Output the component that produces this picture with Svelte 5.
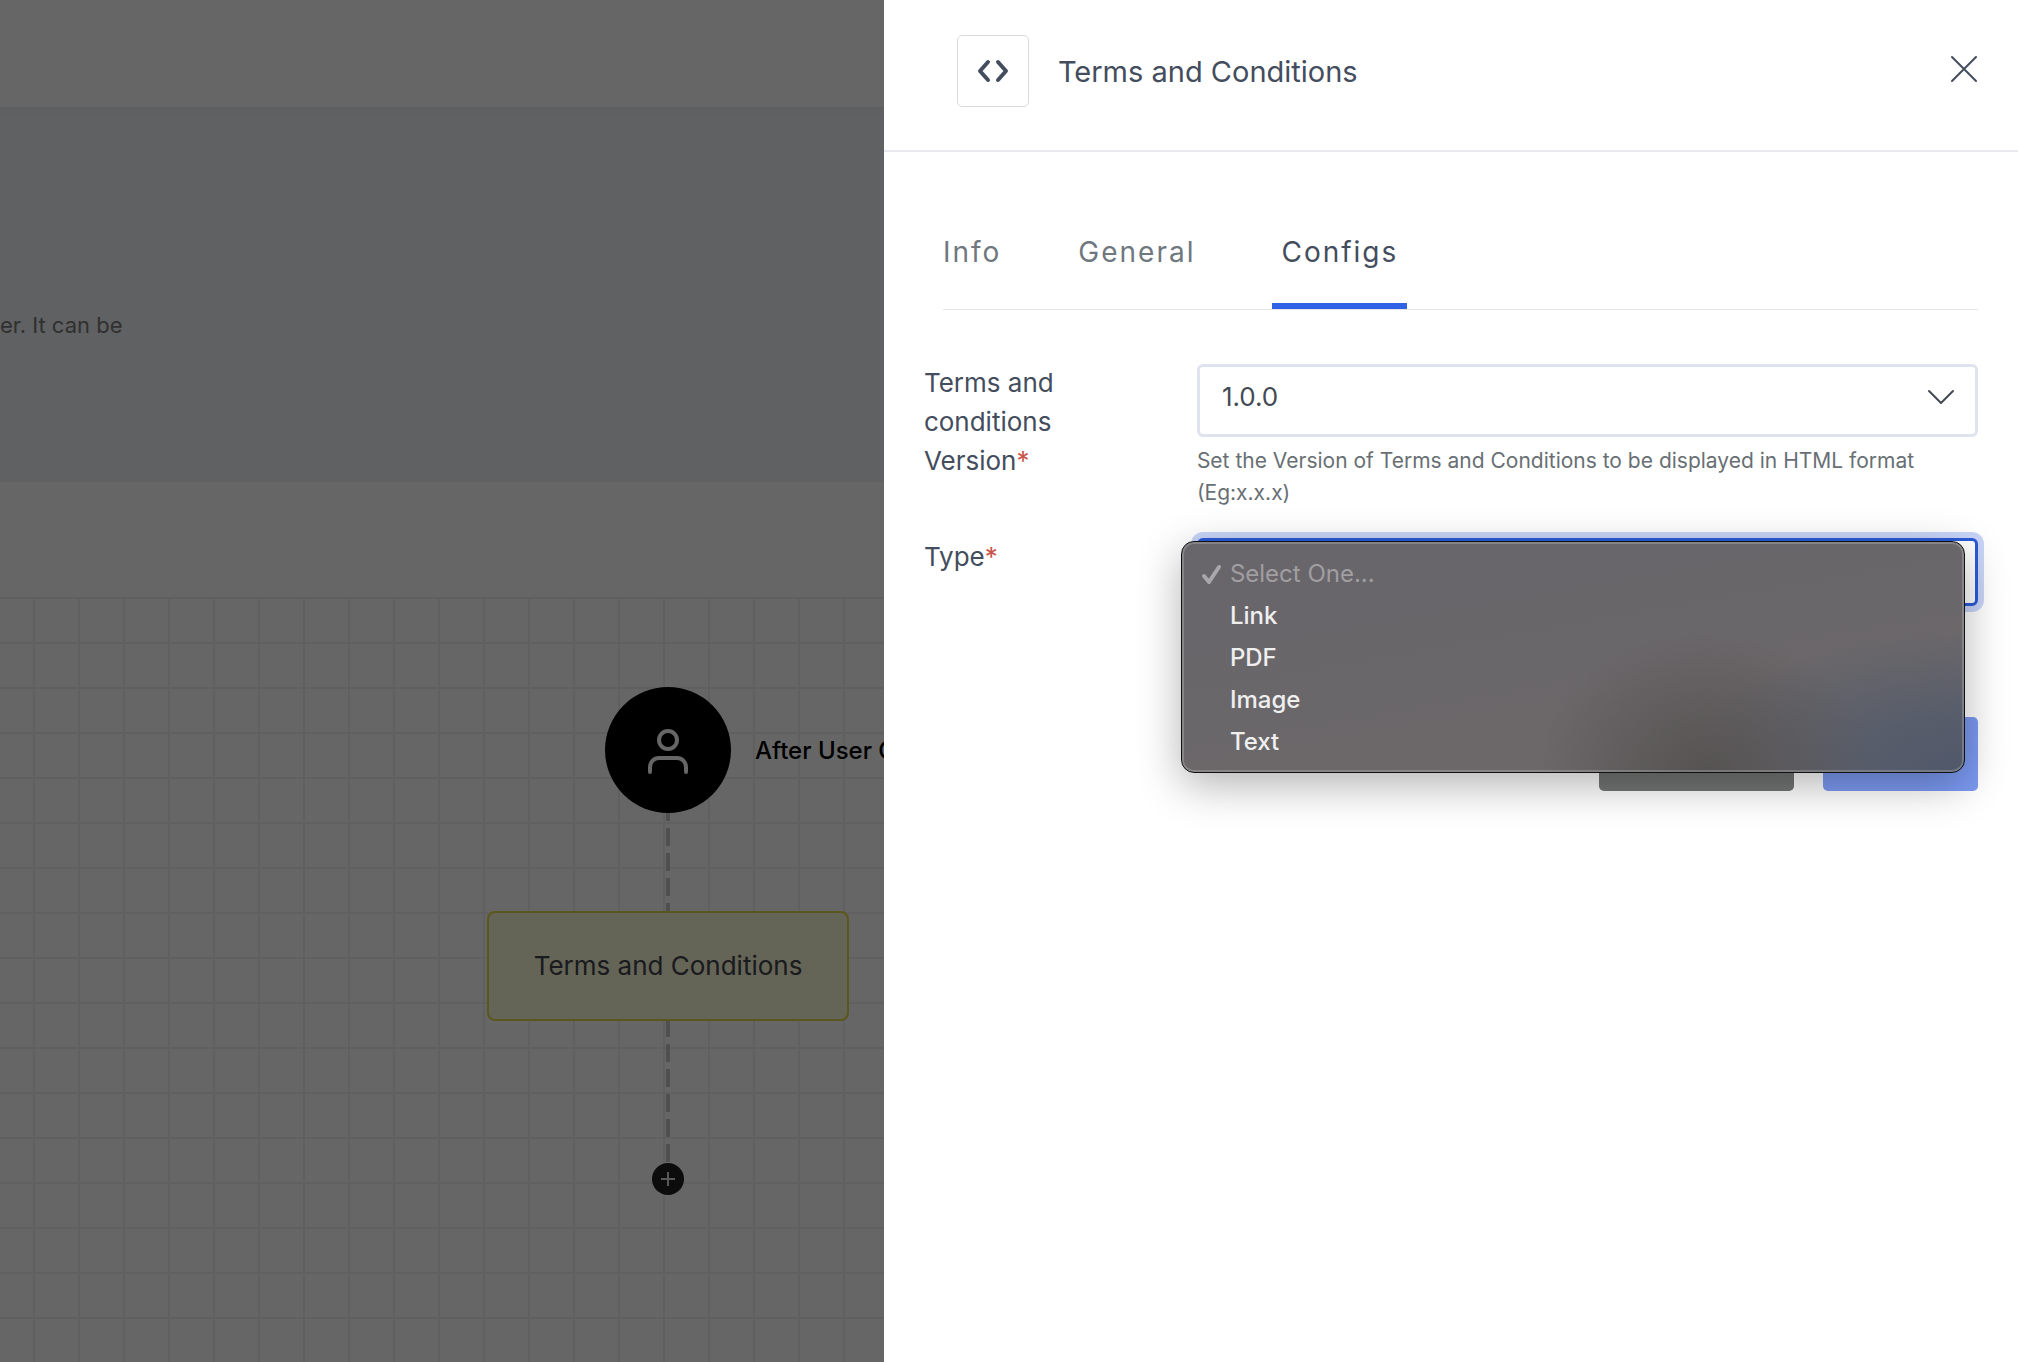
<script>
	let tabs = ['Info', 'General', 'Configs'];
	let activeTab = 'Configs';

	let versions = ['1.0.0'];
	let version = '1.0.0';

	let types = ['Link', 'PDF', 'Image', 'Text'];
	let type = '';
	let drawerOpen = true;
	let menuOpen = true;

	function pickType(value) {
		type = value;
		menuOpen = false;
	}
</script>

<div class="page">
	<div class="topbar"></div>
	<section class="banner">
		<p>er. It can be</p>
	</section>
	<div class="toolbar"></div>
	<main class="canvas">
		<div class="flow">
			<div class="start">
				<svg viewBox="0 0 44 48" width="44" height="48" fill="none" stroke="#fff" stroke-width="4" stroke-linecap="round">
					<circle cx="22" cy="14" r="9" />
					<path d="M4 46v-5a9 9 0 0 1 9-9h18a9 9 0 0 1 9 9v5" />
				</svg>
				<span class="start-label">After User C</span>
			</div>
			<svg class="link" width="4" height="98"><path d="M2 0V98" stroke-dashoffset="10" /></svg>
			<div class="node">Terms and Conditions</div>
			<svg class="link" width="4" height="142"><path d="M2 0V142" stroke-dashoffset="2" /></svg>
			<button class="add" aria-label="Add step">
				<svg viewBox="0 0 14 14" width="14" height="14" stroke="#ddd" stroke-width="2"><path d="M7 0v14M0 7h14" /></svg>
			</button>
		</div>
	</main>

	{#if drawerOpen}
		<div class="backdrop"></div>
		<aside class="drawer">
			<header>
				<span class="code">
					<svg viewBox="0 0 32 24" width="32" height="24" fill="none" stroke="#434d5d" stroke-width="4" stroke-linecap="round" stroke-linejoin="round">
						<path d="M11 3L3 12l8 9M21 3l8 9-8 9" />
					</svg>
				</span>
				<h1>Terms and Conditions</h1>
				<button class="close" aria-label="Close" on:click={() => (drawerOpen = false)}>
					<svg viewBox="0 0 28 28" width="28" height="28" stroke="#434d5d" stroke-width="2" stroke-linecap="round"><path d="M2 2l24 24M26 2L2 26" /></svg>
				</button>
			</header>

			<nav>
				{#each tabs as tab}
					<button class:active={tab === activeTab} on:click={() => (activeTab = tab)}>{tab}</button>
				{/each}
			</nav>

			<form on:submit|preventDefault>
				<div class="row">
					<label for="version">Terms and conditions Version<em>*</em></label>
					<div class="field">
						<div class="control">
							<select id="version" class="version" bind:value={version}>
								{#each versions as v}
									<option value={v}>{v}</option>
								{/each}
							</select>
							<svg class="chevron" viewBox="0 0 28 16" width="28" height="16" fill="none" stroke="#434a54" stroke-width="2" stroke-linecap="round" stroke-linejoin="round">
								<path d="M2 2l12 12L26 2" />
							</svg>
						</div>
						<p class="help">Set the Version of Terms and Conditions to be displayed in HTML format (Eg:x.x.x)</p>
					</div>
				</div>

				<div class="row">
					<label for="type">Type<em>*</em></label>
					<div class="field">
						<div class="control">
							<select id="type" class="type" bind:value={type}>
								<option value=""></option>
								{#each types as t}
									<option value={t}>{t}</option>
								{/each}
							</select>
							{#if menuOpen}
								<ul class="menu">
									<li>
										<button type="button" disabled>
											<svg viewBox="0 0 22 22" width="22" height="22" fill="none" stroke="#a9a7a9" stroke-width="4" stroke-linecap="round" stroke-linejoin="round">
												<path d="M4 13l5 6L19 4" />
											</svg>
											Select One...
										</button>
									</li>
									{#each types as t}
										<li><button type="button" on:click={() => pickType(t)}>{t}</button></li>
									{/each}
								</ul>
							{/if}
						</div>
					</div>
				</div>

				<div class="actions">
					<button type="button" class="cancel" aria-label="Cancel"></button>
					<button type="submit" class="save" aria-label="Save"></button>
				</div>
			</form>
		</aside>
	{/if}
</div>

<style>
	:global(body) {
		background: #fff;
	}
	.page {
		position: relative;
		display: flex;
		flex-direction: column;
		min-height: 100vh;
		overflow: hidden;
		font-family: Inter, 'Liberation Sans', sans-serif;
		color: #434d5d;
	}
	button {
		font: inherit;
		color: inherit;
		border: 0;
		padding: 0;
		background: none;
		cursor: pointer;
	}
	svg {
		display: block;
	}
	.topbar {
		height: 107px;
	}
	.banner {
		box-sizing: border-box;
		height: 375px;
		padding-top: 202px;
		background: linear-gradient(#eaedf1, #f1f2f6 8px);
	}
	.banner p {
		margin: 0;
		font-size: 22px;
		line-height: 32px;
		color: #787878;
	}
	.toolbar {
		height: 115px;
	}
	.canvas {
		flex: 1;
		background-image: linear-gradient(#f0f0f0 2px, transparent 2px), linear-gradient(90deg, #f0f0f0 2px, transparent 2px);
		background-size: 45px 45px;
		background-position: 33px 0;
	}
	.flow {
		display: flex;
		flex-direction: column;
		align-items: center;
		width: 362px;
		margin-left: 487px;
		padding-top: 90px;
	}
	.start {
		position: relative;
		display: flex;
		align-items: center;
		justify-content: center;
		width: 126px;
		height: 126px;
		border-radius: 50%;
		background: #000;
	}
	.start-label {
		position: absolute;
		left: 150px;
		font-size: 24px;
		font-weight: 500;
		white-space: nowrap;
		color: #000;
	}
	.link path {
		stroke: #c6c6c6;
		stroke-width: 4;
		stroke-dasharray: 18 7;
	}
	.node {
		box-sizing: border-box;
		width: 100%;
		border: 2px solid #e3d74b;
		border-radius: 8px;
		background: #fafad9;
		font-size: 26px;
		line-height: 106px;
		text-align: center;
		color: #3f444b;
	}
	.add {
		display: flex;
		align-items: center;
		justify-content: center;
		width: 32px;
		height: 32px;
		border-radius: 50%;
		background: #1e1e1e;
	}
	.backdrop {
		position: absolute;
		inset: 0;
		background: rgba(0, 0, 0, 0.6);
	}
	.drawer {
		position: absolute;
		top: 0;
		right: 0;
		bottom: 0;
		width: 56.2%;
		background: #fff;
	}
	header {
		display: flex;
		align-items: center;
		padding: 35px 40px 43px 73px;
		border-bottom: 2px solid #e8e9ee;
	}
	.code {
		box-sizing: border-box;
		display: flex;
		align-items: center;
		justify-content: center;
		width: 72px;
		height: 72px;
		border: 1px solid #d9d9d9;
		border-radius: 5px;
	}
	h1 {
		flex: 1;
		margin: 0 0 0 29px;
		padding-top: 2px;
		font-size: 29px;
		line-height: 40px;
		font-weight: 400;
	}
	.close {
		padding-bottom: 4px;
	}
	nav {
		display: flex;
		gap: 77px;
		margin: 73px 40px 0 59px;
		border-bottom: 1px solid #e4e6e8;
	}
	nav button {
		padding: 8px 0 31px;
		border-bottom: 6px solid transparent;
		font-size: 28px;
		line-height: 39px;
		letter-spacing: 2px;
		color: #6f777f;
	}
	nav button.active {
		padding: 8px 9px 31px;
		border-color: #2f62e4;
		color: #434d5d;
	}
	form {
		padding: 53px 40px 0;
	}
	.row {
		display: flex;
		margin-bottom: 28px;
	}
	label {
		flex: 0 0 180px;
		margin-right: 93px;
		font-size: 26px;
		line-height: 39px;
	}
	em {
		font-style: normal;
		color: #c9544b;
	}
	.field {
		flex: 1;
		padding-top: 1px;
	}
	.control {
		position: relative;
	}
	select {
		display: block;
		box-sizing: border-box;
		width: 100%;
		appearance: none;
		padding: 0 60px 8px 22px;
		border: 3px solid #dfe3ee;
		border-radius: 6px;
		outline: 0;
		background: #fff;
		font: 400 26px Inter, 'Liberation Sans', sans-serif;
		color: #434a54;
	}
	.version {
		height: 73px;
	}
	.type {
		height: 68px;
		border-color: #2a5bd7;
		box-shadow: 0 0 0 6px #c9d5f8;
	}
	.chevron {
		position: absolute;
		top: 25px;
		right: 23px;
		pointer-events: none;
	}
	.help {
		margin: 0;
		padding-top: 8px;
		font-size: 21px;
		line-height: 32px;
		color: #686f74;
	}
	.menu {
		position: absolute;
		z-index: 1;
		top: 3px;
		left: -16px;
		right: 13px;
		margin: 0;
		padding: 11px 0 9px;
		border: 1px solid #111;
		border-radius: 13px;
		list-style: none;
		/* frosted tint of the two buttons behind the list */
		background:
			radial-gradient(170px 140px at 67% 100%, #565353, rgba(88, 85, 85, 0.75) 35%, rgba(98, 94, 96, 0) 100%),
			radial-gradient(280px 140px at 100% 100%, #50586a, rgba(82, 90, 107, 0.8) 40%, rgba(96, 96, 107, 0) 100%),
			linear-gradient(170deg, #68656b, #6a676a 50%, #6d6969);
		box-shadow: inset 0 0 0 2px rgba(255, 255, 255, 0.2), 0 12px 44px rgba(0, 0, 0, 0.3);
	}
	.menu button {
		display: flex;
		align-items: center;
		width: 100%;
		padding-left: 48px;
		font-size: 24px;
		font-weight: 500;
		line-height: 42px;
		color: #f0eff0;
	}
	.menu button:disabled {
		gap: 8px;
		padding-left: 18px;
		font-weight: 400;
		color: #a09ea1;
	}
	.actions {
		display: flex;
		justify-content: flex-end;
		gap: 29px;
		margin-top: 111px;
	}
	.actions button {
		height: 74px;
		border-radius: 5px;
	}
	.actions .cancel {
		width: 195px;
		background: #747676;
	}
	.actions .save {
		width: 155px;
		background: #7c9af2;
	}
</style>
